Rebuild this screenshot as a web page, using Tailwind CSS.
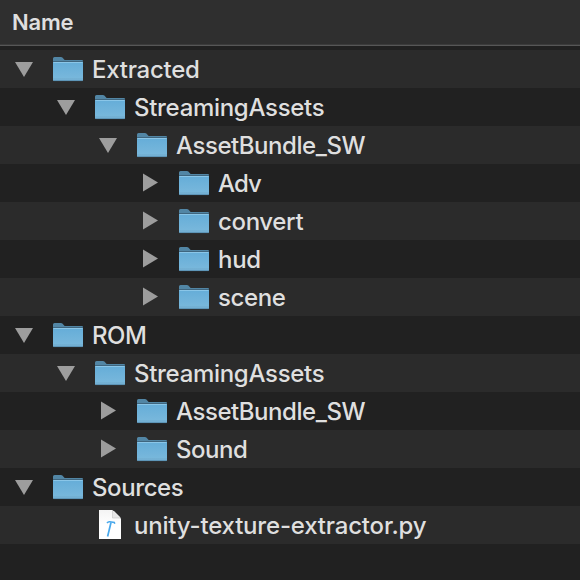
<!DOCTYPE html>
<html lang="en">
<head>
<meta charset="utf-8">
<title>Files</title>
<script src="https://cdn.jsdelivr.net/npm/@tailwindcss/browser@4"></script>
</head>
<body class="w-[580px] h-[580px] overflow-hidden bg-[#212121] font-['Inter',sans-serif] text-[#dfdfdf]">
<svg width="0" height="0" class="absolute">
  <defs>
    <linearGradient id="face" x1="0" y1="0" x2="0" y2="1"><stop offset="0" stop-color="#65add8"/><stop offset="1" stop-color="#7bb9dc"/></linearGradient>
    <linearGradient id="paper" x1="0" y1="0" x2="0" y2="1"><stop offset="0" stop-color="#f4f4f4"/><stop offset=".5" stop-color="#ffffff"/></linearGradient>
    <symbol id="folder" viewBox="0 0 32 38">
      <path d="M1 8.500q0-1.500 1.500-1.500h6.500q1.500 0 2.500 1.800l1.200 1.200H30q1 0 1 1V15H1z" fill="#5286a5"/>
      <path d="M1 11h30v1H1z" fill="#3f667f"/>
      <path d="M1 12h30V30q0 1-1 1h-28Q1 31 1 30z" fill="url(#face)"/>
      <path d="M1.500 12.500h29" stroke="#8ac6e8"/>
      <path d="M1 29h30" stroke="#6ca6c8" stroke-width=".8"/>
      <path d="M1.500 30.600h29" stroke="#5388a8" stroke-width=".8"/>
    </symbol>
    <symbol id="open" viewBox="0 0 18 38"><path d="M0 12h18L9 27z" fill="#9d9d9d"/></symbol>
    <symbol id="closed" viewBox="0 0 18 38"><path d="M2 9.500v18l15-9z" fill="#9d9d9d"/></symbol>
    <symbol id="script" viewBox="0 0 32 38">
      <path d="M5 4h13l2.500 1.500 5.500 5.500 1 2V33H5z" fill="url(#paper)"/>
      <path d="M18.500 4.500v7.500H26.500z" fill="#e6e6e6"/>
      <path d="M18.500 5v7H26" fill="none" stroke="#c2c2c2" stroke-width=".6"/>
      <path d="M13 17q1-1.400 2.700-1.200l4.600.6.5 1.400" fill="none" stroke="#48a8ec" stroke-width="1.500"/>
      <path d="M17 16.500L13.600 30.500" stroke="#48a8ec" stroke-width="1.700"/>
    </symbol>
  </defs>
</svg>
<header class="h-[45px] border-b border-[#3b3b3b] bg-[#2f2f2f] pl-3 text-[22px] leading-[44px] font-semibold tracking-[-0.2px]">Name</header>
<div class="h-px bg-[#575757]"></div>
<main class="mt-1 text-2xl leading-[40px] font-[450] tracking-[-0.26px] whitespace-nowrap [&>div]:flex [&>div]:h-[38px] [&>div:nth-child(odd)]:bg-[#2b2b2b] [&_svg]:shrink-0">
  <div class="pl-[15px]"><svg class="w-[18px] h-[38px] mr-[19px]"><use href="#open"/></svg><svg class="w-8 h-[38px] mr-2"><use href="#folder"/></svg><span>Extracted</span></div>
  <div class="pl-[57px]"><svg class="w-[18px] h-[38px] mr-[19px]"><use href="#open"/></svg><svg class="w-8 h-[38px] mr-2"><use href="#folder"/></svg><span class="tracking-[-0.3px]">StreamingAssets</span></div>
  <div class="pl-[99px]"><svg class="w-[18px] h-[38px] mr-[19px]"><use href="#open"/></svg><svg class="w-8 h-[38px] mr-2"><use href="#folder"/></svg><span class="tracking-[-0.45px]">AssetBundle_SW</span></div>
  <div class="pl-[141px]"><svg class="w-[18px] h-[38px] mr-[19px]"><use href="#closed"/></svg><svg class="w-8 h-[38px] mr-2"><use href="#folder"/></svg><span class="tracking-[-0.9px]">Adv</span></div>
  <div class="pl-[141px]"><svg class="w-[18px] h-[38px] mr-[19px]"><use href="#closed"/></svg><svg class="w-8 h-[38px] mr-2"><use href="#folder"/></svg><span class="tracking-[-0.35px]">convert</span></div>
  <div class="pl-[141px]"><svg class="w-[18px] h-[38px] mr-[19px]"><use href="#closed"/></svg><svg class="w-8 h-[38px] mr-2"><use href="#folder"/></svg><span>hud</span></div>
  <div class="pl-[141px]"><svg class="w-[18px] h-[38px] mr-[19px]"><use href="#closed"/></svg><svg class="w-8 h-[38px] mr-2"><use href="#folder"/></svg><span class="tracking-[-0.4px]">scene</span></div>
  <div class="pl-[15px]"><svg class="w-[18px] h-[38px] mr-[19px]"><use href="#open"/></svg><svg class="w-8 h-[38px] mr-2"><use href="#folder"/></svg><span class="tracking-[-0.5px]">ROM</span></div>
  <div class="pl-[57px]"><svg class="w-[18px] h-[38px] mr-[19px]"><use href="#open"/></svg><svg class="w-8 h-[38px] mr-2"><use href="#folder"/></svg><span class="tracking-[-0.3px]">StreamingAssets</span></div>
  <div class="pl-[99px]"><svg class="w-[18px] h-[38px] mr-[19px]"><use href="#closed"/></svg><svg class="w-8 h-[38px] mr-2"><use href="#folder"/></svg><span class="tracking-[-0.45px]">AssetBundle_SW</span></div>
  <div class="pl-[99px]"><svg class="w-[18px] h-[38px] mr-[19px]"><use href="#closed"/></svg><svg class="w-8 h-[38px] mr-2"><use href="#folder"/></svg><span class="tracking-[-0.5px]">Sound</span></div>
  <div class="pl-[15px]"><svg class="w-[18px] h-[38px] mr-[19px]"><use href="#open"/></svg><svg class="w-8 h-[38px] mr-2"><use href="#folder"/></svg><span class="tracking-[-0.4px]">Sources</span></div>
  <div class="pl-[94px]"><svg class="w-8 h-[38px] mr-2"><use href="#script"/></svg><span class="tracking-[-0.19px]">unity-texture-extractor.py</span></div>
</main>
</body>
</html>
